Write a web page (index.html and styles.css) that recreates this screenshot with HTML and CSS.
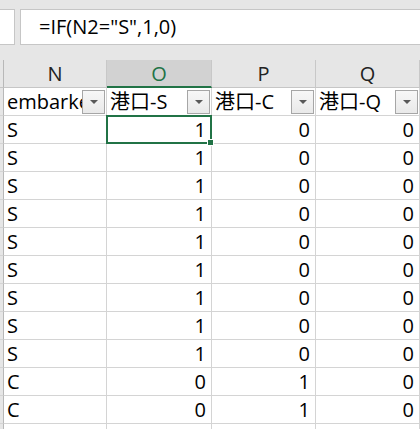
FILE: index.html
```html
<!DOCTYPE html>
<html lang="zh-CN">
<head>
    <meta charset="UTF-8">
    <title>港口 - Sheet</title>
    <link rel="stylesheet" href="styles.css">
</head>
<body>

    <div class="topbar">
        <div class="name-box"></div>
        <div class="formula-box">=IF(N2="S",1,0)</div>
    </div>

    <div class="sheet" id="sheet">
        <!-- column headers -->
        <div class="corner"></div>
        <div class="col-head">N</div>
        <div class="col-head selected">O</div>
        <div class="col-head">P</div>
        <div class="col-head">Q</div>

        <!-- filter row -->
        <div class="row-head"></div>
        <div class="cell filter"><span class="label">embarked</span><span class="filter-btn"></span></div>
        <div class="cell filter"><span class="label">港口-S</span><span class="filter-btn"></span></div>
        <div class="cell filter"><span class="label">港口-C</span><span class="filter-btn"></span></div>
        <div class="cell filter"><span class="label">港口-Q</span><span class="filter-btn"></span></div>
    </div>

    <script>
        // Rows under the filter header
        const rows = [
            ['S', 1, 0, 0],
            ['S', 1, 0, 0],
            ['S', 1, 0, 0],
            ['S', 1, 0, 0],
            ['S', 1, 0, 0],
            ['S', 1, 0, 0],
            ['S', 1, 0, 0],
            ['S', 1, 0, 0],
            ['S', 1, 0, 0],
            ['C', 0, 1, 0],
            ['C', 0, 1, 0],
            ['', '', '', '']
        ];

        const sheet = document.getElementById('sheet');
        rows.forEach((row, i) => {
            const head = document.createElement('div');
            head.className = 'row-head';
            sheet.appendChild(head);

            row.forEach((value, j) => {
                const div = document.createElement('div');
                div.className = j === 0 ? 'cell' : 'cell num';
                if (i === 0 && j === 1) div.classList.add('active');
                div.textContent = value;
                sheet.appendChild(div);
            });
        });
    </script>
</body>
</html>
```

FILE: styles.css
```css
body {
    margin: 0;
    padding: 0;
    background-color: #fff;
    font-family: "Open Sans", "Noto Sans CJK SC", sans-serif;
    font-size: 20px;
    color: #000;
    overflow: hidden;
}
.topbar {
    display: flex;
    height: 60px;
    padding-top: 9px;
    box-sizing: border-box;
    background-color: #e6e6e6;
}
.name-box {
    width: 15px;
    height: 36px;
    background-color: #fff;
    border: 1px solid #c6c6c6;
    border-left: none;
    box-sizing: border-box;
}
.formula-box {
    flex: 1;
    height: 36px;
    margin-left: 5px;
    padding-left: 18px;
    background-color: #fff;
    border: 1px solid #c6c6c6;
    border-right: none;
    box-sizing: border-box;
    line-height: 34px;
}
.sheet {
    display: grid;
    grid-template-columns: 4px 103px 105px 104px 104px;
    grid-auto-rows: 28px;
}
.corner {
    background-color: #e6e6e6;
    border-right: 1px solid #b8b8b8;
    border-bottom: 1px solid #c6c6c6;
}
.col-head {
    background-color: #e6e6e6;
    border-right: 1px solid #c8c8c8;
    border-bottom: 1px solid #c6c6c6;
    text-align: center;
    line-height: 28px;
    color: #222;
}
.col-head.selected {
    background-color: #d2d2d2;
    color: #217346;
    border-bottom: 2px solid #217346;
}
.row-head {
    background-color: #e6e6e6;
    border-right: 1px solid #b8b8b8;
    border-bottom: 1px solid #d4d4d4;
}
.cell {
    position: relative;
    border-right: 1px solid #d4d4d4;
    border-bottom: 1px solid #d4d4d4;
    padding: 0 5px 0 3px;
    line-height: 27px;
    white-space: nowrap;
    overflow: hidden;
}
.cell.num {
    text-align: right;
}
.cell.filter .label {
    display: block;
    overflow: hidden;
}
.filter-btn {
    position: absolute;
    top: 2px;
    right: 1px;
    width: 23px;
    height: 24px;
    box-sizing: border-box;
    border: 1px solid #a6a6a6;
    background: linear-gradient(#f7f7f7, #e9e9e9);
}
.filter-btn::after {
    content: "";
    position: absolute;
    left: 7px;
    top: 9px;
    border-left: 4px solid transparent;
    border-right: 4px solid transparent;
    border-top: 4px solid #595959;
}
.cell.active {
    overflow: visible;
}
.cell.active::before {
    content: "";
    position: absolute;
    left: -1px;
    top: -1px;
    right: -1px;
    bottom: -1px;
    border: 2px solid #217346;
}
.cell.active::after {
    content: "";
    position: absolute;
    right: -3px;
    bottom: -3px;
    width: 5px;
    height: 5px;
    background-color: #217346;
    border: 1px solid #fff;
    z-index: 1;
}
```
